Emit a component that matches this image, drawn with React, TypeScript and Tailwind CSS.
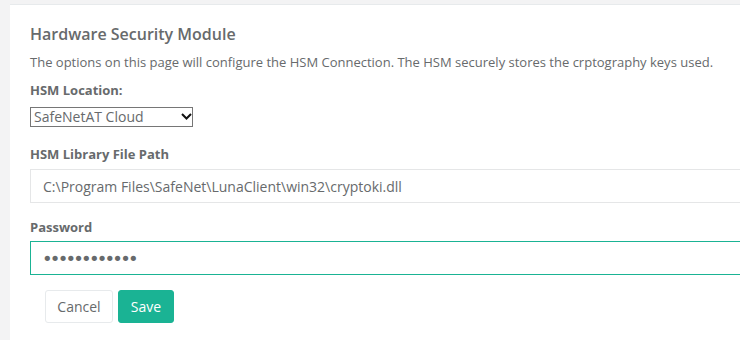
import React from "react";

export default function App() {
  return (
    <div
      className="h-[340px] w-[740px] overflow-hidden bg-[#f3f3f4] pl-[10px] pt-[4px] text-[#676a6c]"
      style={{ fontFamily: '"Open Sans", "Liberation Sans", sans-serif' }}
    >
      <div className="h-[400px] w-[900px] border-t border-[#e7eaec] bg-white px-[20px] pt-[19px]">
        <h3 className="text-[16px] font-semibold leading-[20px]">Hardware Security Module</h3>
        <p className="mt-[9px] text-[13px] leading-[18px]">
          The options on this page will configure the HSM Connection. The HSM securely stores the crptography keys used.
        </p>
        <label className="mt-[10px] block text-[13px] font-bold leading-[18px]">HSM Location:</label>
        <div className="relative mt-[8px] h-[20px] w-[163px]">
          <select
            defaultValue="cloud"
            className="block h-[20px] w-[163px] appearance-none border border-[#767676] bg-white pl-[3px] text-[14px] leading-[18px] text-[#676a6c] outline-none"
          >
            <option value="cloud">SafeNetAT Cloud</option>
            <option value="local">SafeNetAT Local</option>
          </select>
          <svg
            className="pointer-events-none absolute left-[151px] top-[6px]"
            width="11"
            height="7"
            viewBox="0 0 11 7"
            fill="none"
          >
            <path d="M1 1 L5.5 5.5 L10 1" stroke="#111" strokeWidth="2" />
          </svg>
        </div>
        <label className="mt-[18px] block text-[13px] font-bold leading-[18px]">HSM Library File Path</label>
        <input
          type="text"
          defaultValue="C:\Program Files\SafeNet\LunaClient\win32\cryptoki.dll"
          className="mt-[6px] block h-[34px] w-[860px] border border-[#e5e6e7] bg-white px-[12px] text-[14px] text-[#676a6c] outline-none"
        />
        <label className="mt-[15px] block text-[13px] font-bold leading-[18px]">Password</label>
        <input
          type="password"
          defaultValue="abcdefghijkl"
          className="mt-[5px] block h-[34px] w-[860px] border border-[#1ab394] bg-white px-[11px] text-[18px] tracking-[-2.8px] text-[#676a6c] outline-none"
          style={{ fontFamily: '"DejaVu Sans", sans-serif' }}
        />
        <div className="ml-[15px] mt-[15px] flex gap-[5px]">
          <button className="h-[33px] w-[68px] rounded-[3px] border border-[#e7eaec] bg-white text-[14px] text-[#676a6c]">
            Cancel
          </button>
          <button className="h-[33px] w-[56px] rounded-[3px] border border-[#1ab394] bg-[#1ab394] text-[14px] text-white">
            Save
          </button>
        </div>
      </div>
    </div>
  );
}
